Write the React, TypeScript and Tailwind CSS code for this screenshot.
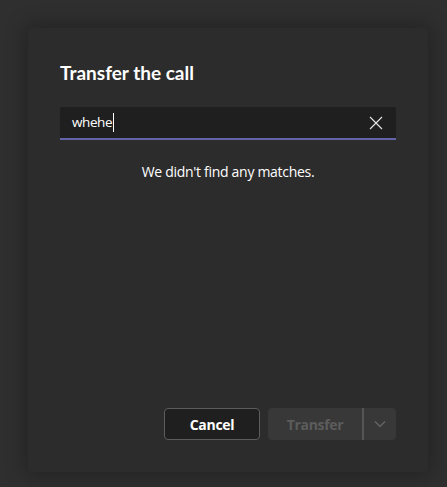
import React from "react";

export default function App() {
  return (
    <div
      className="w-[447px] h-[487px] bg-[#2f2f2f] pt-[28px] pl-[28px]"
      style={{ fontFamily: '"Open Sans", "Noto Sans", sans-serif' }}
    >
      <div className="w-[400px] h-[444px] bg-[#2d2c2c] rounded-[4px] shadow-[0_0_20px_4px_rgba(0,0,0,0.25)] px-[32px] pt-[33px] pb-[32px] flex flex-col">
        <h1
          className="text-[19px] leading-[24px] font-bold text-white"
          style={{ fontFamily: 'Lato, "Open Sans", sans-serif' }}
        >
          Transfer the call
        </h1>
        <div className="mt-[22px] h-[33px] bg-[#1f1f1f] border-b-2 border-[#6264a7] rounded-t-[2px] flex items-center pl-[12px] pr-[12px]">
          <span className="text-[13.5px] text-white tracking-[-0.4px]">whehe</span>
          <span className="w-px h-[19px] bg-white ml-[1px]"></span>
          <div className="flex-1"></div>
          <svg width="14" height="14" viewBox="0 0 14 14" className="mr-[1px]">
            <path d="M1 1L13 13M13 1L1 13" stroke="#e6e6e6" strokeWidth="1.1" fill="none" />
          </svg>
        </div>
        <p className="mt-[22px] text-center text-[14px] leading-[20px] text-white tracking-[-0.3px]">
          We didn't find any matches.
        </p>
        <div className="flex-1"></div>
        <div className="flex justify-end gap-[8px]">
          <button className="w-[96px] h-[32px] rounded-[4px] border border-[#5c5c5c] bg-[#1f1f1f] text-white text-[14px] font-bold tracking-[-0.3px]">
            Cancel
          </button>
          <div className="w-[128px] h-[32px] rounded-[4px] bg-[#383838] flex items-center">
            <span className="w-[94px] text-center text-[#5c5c5c] text-[14px] font-bold tracking-[-0.3px]">
              Transfer
            </span>
            <span className="w-[2px] h-[32px] bg-[#555555]"></span>
            <div className="flex-1 flex items-center justify-center">
              <svg width="12" height="8" viewBox="0 0 12 8">
                <path d="M1 1.5L6 6.5L11 1.5" stroke="#6a6a6a" strokeWidth="1.1" fill="none" />
              </svg>
            </div>
          </div>
        </div>
      </div>
    </div>
  );
}
